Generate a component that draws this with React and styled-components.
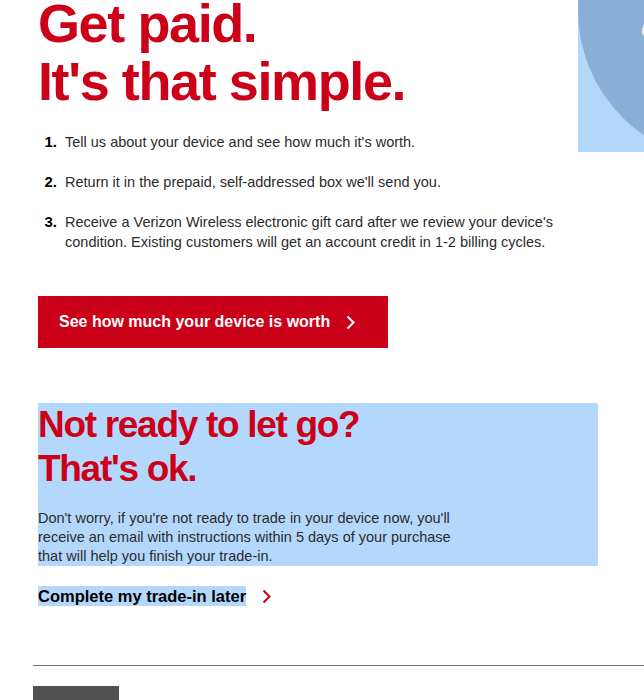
import React from "react";
import styled, { createGlobalStyle } from "styled-components";

// GLOBAL
const GlobalStyle = createGlobalStyle`
   html, body {
      margin: 0;
      padding: 0;
      background: #ffffff;
      font-family: "Liberation Sans", Arial, Helvetica, sans-serif;
      color: #222222;
      overflow: hidden;
   }
   ::selection {
      background: #b4d8fc;
   }
`;

// STYLES
const Page = styled.div`
   width: 644px;
   height: 700px;
   padding-left: 33px;
   box-sizing: border-box;
   overflow: hidden;
`;

const Inner = styled.div`
   padding-left: 5px;
`;

const Top = styled.section`
   display: flex;
   justify-content: space-between;
   align-items: flex-start;
`;

const Intro = styled.div`
   display: flex;
   flex-direction: column;
`;

const Headline = styled.h1`
   margin: ${(props) => (props.size === "small" ? "0" : "-6px 0 0")};
   font-size: ${(props) => (props.size === "small" ? "37px" : "54px")};
   line-height: ${(props) => (props.size === "small" ? "44px" : "58px")};
   letter-spacing: ${(props) => (props.size === "small" ? "-1.3px" : "-1.4px")};
   font-weight: 700;
   color: #cd0019;
`;

const Steps = styled.ol`
   list-style: none;
   margin: 22px 0 0;
   padding: 0;
   display: flex;
   flex-direction: column;
   gap: 20px;
`;

const Step = styled.li`
   display: grid;
   grid-template-columns: 19px 1fr;
   column-gap: 8px;
   font-size: 14.5px;
   line-height: 20px;
   color: #2b2b2b;

   .num {
      text-align: right;
      font-weight: 700;
      font-size: 15px;
      color: #000;
   }
`;

const PrimaryButton = styled.button`
   margin-top: 44px;
   width: 350px;
   height: 52px;
   border: 0;
   padding: 0 0 0 21px;
   background: #cb0019;
   color: #ffffff;
   font-family: inherit;
   font-size: 16px;
   font-weight: 700;
   display: flex;
   align-items: center;
   gap: 16px;
   cursor: pointer;
`;

const Illustration = styled.div`
   width: 66px;
   height: 152px;
   flex: none;
   background: #b3d7fb;
   overflow: hidden;

   svg {
      display: block;
   }
`;

const Later = styled.section`
   margin-top: 55px;
   width: 560px;
   background: #b4d8fc;
`;

const LaterText = styled.p`
   margin: 18px 0 0;
   width: 430px;
   font-size: 14.5px;
   line-height: 19px;
   color: #2b2b2b;
`;

const TextLink = styled.a`
   margin-top: 20px;
   display: inline-flex;
   align-items: center;
   gap: 16px;
   font-size: 16.5px;
   font-weight: 700;
   color: #000;
   text-decoration: none;

   span {
      background: #b4d8fc;
      line-height: 20px;
   }
`;

const Rule = styled.hr`
   margin: 59px 0 0;
   border: 0;
   border-top: 1px solid #767676;
`;

const FooterTab = styled.div`
   margin-top: 20px;
   width: 86px;
   height: 20px;
   background: #505050;
`;

const Chevron = ({ color, size = 14 }) => (
   <svg width={size * 0.6} height={size} viewBox="0 0 9 15" fill="none">
      <path d="M1.5 1.5 L7.5 7.5 L1.5 13.5" stroke={color} strokeWidth="2" />
   </svg>
);

const steps = [
   "Tell us about your device and see how much it's worth.",
   "Return it in the prepaid, self-addressed box we'll send you.",
   "Receive a Verizon Wireless electronic gift card after we review your device's condition. Existing customers will get an account credit in 1-2 billing cycles.",
];

const App = () => {
   return (
      <Page>
         <GlobalStyle />
         <Inner>
            <Top>
               <Intro>
                  <Headline>
                     Get paid.
                     <br />
                     It's that simple.
                  </Headline>
                  <Steps>
                     {steps.map((text, i) => (
                        <Step key={i}>
                           <span className="num">{i + 1}.</span>
                           <span>{text}</span>
                        </Step>
                     ))}
                  </Steps>
                  <PrimaryButton>
                     See how much your device is worth
                     <Chevron color="#ffffff" size={15} />
                  </PrimaryButton>
               </Intro>
               <Illustration>
                  <svg width="66" height="152" viewBox="0 0 66 152">
                     <circle cx="152" cy="10" r="152" fill="#8aafd6" />
                     <path d="M66 24 Q63 28 64 34 L66 36 Z" fill="#d8e8f7" />
                  </svg>
               </Illustration>
            </Top>

            <Later>
               <Headline size="small">
                  Not ready to let go?
                  <br />
                  That's ok.
               </Headline>
               <LaterText>
                  Don't worry, if you're not ready to trade in your device now, you'll
                  receive an email with instructions within 5 days of your purchase
                  that will help you finish your trade-in.
               </LaterText>
            </Later>

            <TextLink href="#">
               <span>Complete my trade-in later</span>
               <Chevron color="#cd0019" size={15} />
            </TextLink>
         </Inner>
         <Rule />
         <FooterTab />
      </Page>
   );
};

export default App;
